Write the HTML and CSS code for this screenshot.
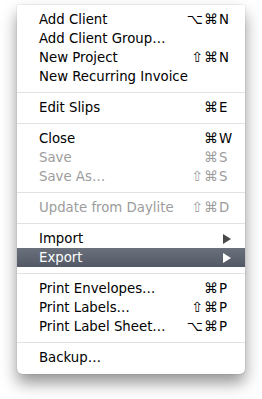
FILE: index.html
```html
<!DOCTYPE html>
<html>
<head>
<meta charset="utf-8">
<link rel="stylesheet" href="styles.css">
</head>
<body>
<div class="menu">
  <div class="item"><span class="label">Add Client</span><span class="sc"><span class="mods">⌥⌘</span><span class="key">N</span></span></div>
  <div class="item"><span class="label">Add Client Group…</span></div>
  <div class="item"><span class="label">New Project</span><span class="sc"><span class="mods">⇧⌘</span><span class="key">N</span></span></div>
  <div class="item"><span class="label">New Recurring Invoice</span></div>
  <div class="sep"></div>
  <div class="item"><span class="label">Edit Slips</span><span class="sc"><span class="mods">⌘</span><span class="key">E</span></span></div>
  <div class="sep"></div>
  <div class="item"><span class="label">Close</span><span class="sc"><span class="mods">⌘</span><span class="key">W</span></span></div>
  <div class="item disabled"><span class="label">Save</span><span class="sc"><span class="mods">⌘</span><span class="key">S</span></span></div>
  <div class="item disabled"><span class="label">Save As…</span><span class="sc"><span class="mods">⇧⌘</span><span class="key">S</span></span></div>
  <div class="sep"></div>
  <div class="item disabled"><span class="label">Update from Daylite</span><span class="sc"><span class="mods">⇧⌘</span><span class="key">D</span></span></div>
  <div class="sep"></div>
  <div class="item"><span class="label">Import</span><span class="arrow"></span></div>
  <div class="item selected"><span class="label">Export</span><span class="arrow"></span></div>
  <div class="sep"></div>
  <div class="item"><span class="label">Print Envelopes…</span><span class="sc"><span class="mods">⌘</span><span class="key">P</span></span></div>
  <div class="item"><span class="label">Print Labels…</span><span class="sc"><span class="mods">⇧⌘</span><span class="key">P</span></span></div>
  <div class="item"><span class="label">Print Label Sheet…</span><span class="sc"><span class="mods">⌥⌘</span><span class="key">P</span></span></div>
  <div class="sep"></div>
  <div class="item"><span class="label">Backup…</span></div>
</div>
</body>
</html>
```
FILE: styles.css
```css
html, body {
  margin: 0;
  padding: 0;
  background: #ffffff;
}
body {
  width: 262px;
  height: 399px;
  overflow: hidden;
  font-family: "DejaVu Sans", "Liberation Sans", sans-serif;
  font-size: 13.3px;
  color: #000;
}
.menu {
  margin: 5px 0 0 17px;
  width: 228px;
  padding: 5px 0 7px 0;
  background: #ffffff;
  border-radius: 0 0 5px 5px;
  box-shadow: 0 9px 16px rgba(0, 0, 0, 0.42), 0 0 1px rgba(0, 0, 0, 0.45);
}
.item {
  display: flex;
  align-items: center;
  justify-content: space-between;
  height: 19px;
  line-height: 19px;
  padding: 0 12px 0 22px;
  white-space: nowrap;
}
.item.disabled {
  color: #9c9c9c;
}
.item.selected {
  background: linear-gradient(#6a717c, #525964);
  color: #ffffff;
}
.sc {
  display: flex;
  align-items: center;
}
.mods {
  text-align: right;
  font-size: 14px;
  letter-spacing: 1px;
}
.key {
  width: 14px;
  text-align: left;
}
.arrow {
  width: 0;
  height: 0;
  margin-right: 2px;
  border-top: 5px solid transparent;
  border-bottom: 5px solid transparent;
  border-left: 8px solid #4a4a4a;
}
.selected .arrow {
  border-left-color: #ffffff;
}
.sep {
  height: 12px;
  display: flex;
  align-items: center;
}
.sep::before {
  content: "";
  display: block;
  width: 100%;
  height: 1px;
  background: #e2e2e2;
}
```
